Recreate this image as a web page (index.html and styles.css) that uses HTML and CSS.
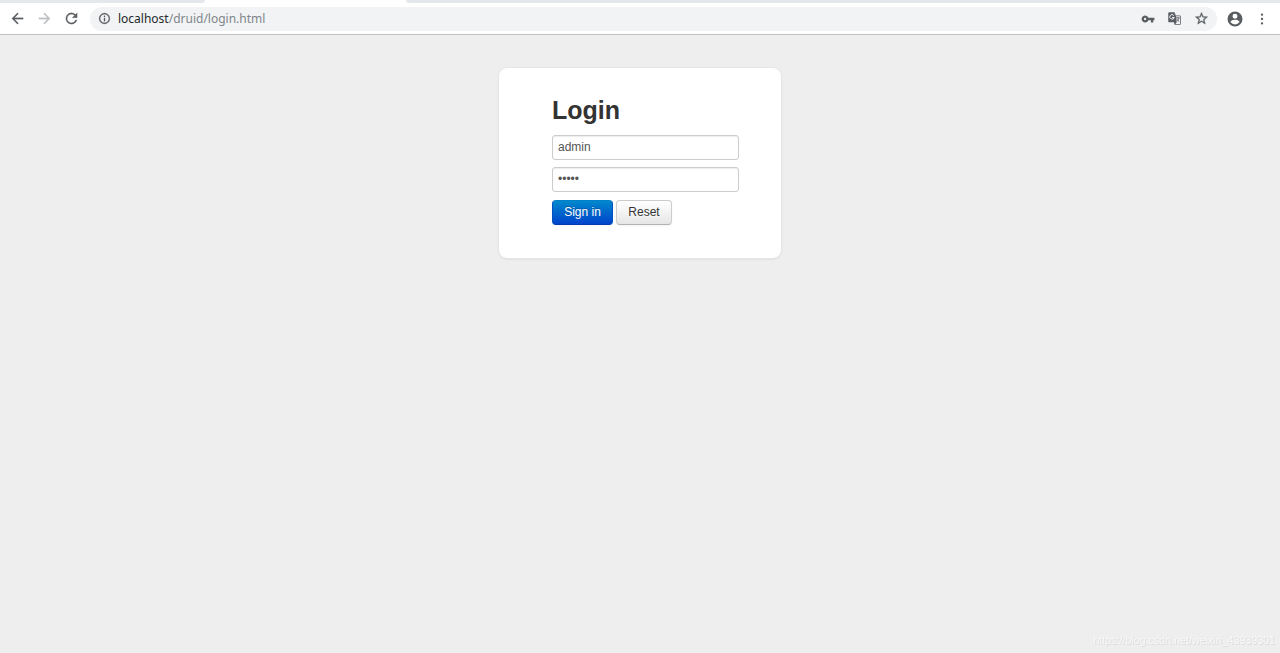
FILE: index.html
```html
<!DOCTYPE html>
<html lang="en">
<head>
    <meta charset="UTF-8">
    <title>druid monitor</title>
    <link rel="stylesheet" href="styles.css">
</head>

<body>
    <!-- browser bar -->
    <header class="browser">
        <div class="tabs">
            <div class="tab-left"></div>
            <div class="tab-right"></div>
        </div>
        <div class="toolbar">
            <svg class="icon back" viewBox="0 0 24 24"><path d="M20 11H7.8l5.6-5.6L12 4l-8 8 8 8 1.4-1.4L7.8 13H20z"/></svg>
            <svg class="icon forward" viewBox="0 0 24 24"><path d="M12 4l-1.4 1.4 5.6 5.6H4v2h12.2l-5.6 5.6L12 20l8-8z"/></svg>
            <svg class="icon reload" viewBox="0 0 24 24"><path d="M17.65 6.35A7.96 7.96 0 0 0 12 4a8 8 0 1 0 7.73 10h-2.08A6 6 0 1 1 12 6c1.66 0 3.14.69 4.22 1.78L13 11h7V4z"/></svg>
            <div class="address">
                <svg class="info" viewBox="0 0 24 24"><path d="M11 17h2v-6h-2zm1-15a10 10 0 1 0 0 20 10 10 0 0 0 0-20zm0 18a8 8 0 1 1 0-16 8 8 0 0 1 0 16zM11 9h2V7h-2z"/></svg>
                <span class="url"><b>localhost</b>/druid/login.html</span>
                <svg class="key" viewBox="0 0 24 24"><path d="M12.65 10A6 6 0 1 0 12.65 14H17v4h4v-4h2v-4zM7 14a2 2 0 1 1 0-4 2 2 0 0 1 0 4z"/></svg>
                <svg class="translate" viewBox="0 0 24 24">
                    <path d="M3 2h9l2 5h7l1 1v13l-1 1h-9l-1-4H3l-1-1V3z"/>
                    <path class="paper" d="M14.5 8.2H20.8V20.8H13.5L15.5 18z"/>
                    <path class="letter-g" d="M11 7.2A3.6 3.6 0 1 0 11.6 10.4H8.3"/>
                    <path class="letter-x" d="M14.5 11h6M17.5 9.5V11M19.3 11c-.5 2.5-2 4.5-3.6 5.5M15.8 12.5c.8 2 2 3.5 3.8 4.5"/>
                </svg>
                <svg class="star" viewBox="0 0 24 24"><path d="M22 9.24l-7.19-.62L12 2 9.19 8.63 2 9.24l5.46 4.73L5.82 21 12 17.27 18.18 21l-1.63-7.03zM12 15.4l-3.76 2.27 1-4.28-3.32-2.88 4.38-.38L12 6.1l1.71 4.04 4.38.38-3.32 2.88 1 4.28z"/></svg>
            </div>
            <svg class="user" viewBox="0 0 24 24"><path d="M12 2a10 10 0 1 0 0 20 10 10 0 0 0 0-20zm0 3a3.3 3.3 0 1 1 0 6.6A3.3 3.3 0 0 1 12 5zm0 14.2a7.2 7.2 0 0 1-6-3.22c.03-1.99 4-3.08 6-3.08s5.97 1.09 6 3.08a7.2 7.2 0 0 1-6 3.22z"/></svg>
            <svg class="more" viewBox="0 0 24 24"><circle cx="12" cy="4.5" r="2"/><circle cx="12" cy="12" r="2"/><circle cx="12" cy="19.5" r="2"/></svg>
        </div>
    </header>

    <!-- login form -->
    <main class="container">
        <form class="form-signin">
            <h2>Login</h2>
            <input type="text" class="input-block" value="admin">
            <input type="password" class="input-block" value="admin">
            <div class="buttons">
                <button type="button" class="btn btn-primary">Sign in</button>
                <button type="reset" class="btn">Reset</button>
            </div>
        </form>
    </main>

    <div class="watermark">https://blog.csdn.net/weixin_43939301</div>
</body>
</html>
```
FILE: styles.css
```css
* {
    box-sizing: border-box;
}

body {
    margin: 0;
    height: 653px;
    overflow: hidden;
    background-color: #eee;
    font-family: "Liberation Sans", Arial, sans-serif;
    font-size: 12px;
    color: #333;
}

/* browser bar */
.browser {
    height: 35px;
    background: #fff;
    border-bottom: 1px solid #bfc1c1;
}

.tabs {
    display: flex;
    justify-content: space-between;
    height: 3px;
}

.tab-left,
.tab-right {
    background: #e4e7eb;
}

.tab-left {
    width: 205px;
    border-bottom-right-radius: 4px;
}

.tab-right {
    width: 874px;
    border-bottom-left-radius: 4px;
}

.toolbar {
    display: flex;
    align-items: center;
    height: 31px;
    padding-left: 9px;
}

svg {
    display: block;
    flex: none;
    fill: #5a5d61;
}

.icon {
    width: 17px;
    height: 17px;
    margin-right: 10px;
    stroke: #5a5d61;
    stroke-width: .3;
}

.forward {
    fill: #bdbfc1;
    stroke: #bdbfc1;
}

.address {
    display: flex;
    align-items: center;
    width: 1127px;
    height: 24px;
    padding: 0 8px;
    border-radius: 12px;
    background: #f1f3f4;
}

.info {
    width: 13px;
    height: 13px;
    stroke: #5a5d61;
    stroke-width: .5;
}

.url {
    flex: 1;
    margin-left: 7px;
    font-family: "Noto Sans", sans-serif;
    font-size: 12px;
    line-height: 18px;
    color: #80868b;
}

.url b {
    font-weight: normal;
    color: #25272a;
}

.key {
    width: 14px;
    height: 14px;
}

.translate {
    width: 15px;
    height: 15px;
    margin-left: 12px;
}

.translate .paper {
    fill: #f1f3f4;
}

.translate .letter-g {
    fill: none;
    stroke: #f1f3f4;
    stroke-width: 1.6;
}

.translate .letter-x {
    fill: none;
    stroke: #5a5d61;
    stroke-width: 1.3;
}

.star {
    width: 15px;
    height: 15px;
    margin-left: 12px;
    stroke: #5a5d61;
    stroke-width: .5;
}

.user {
    width: 18px;
    height: 18px;
    margin-left: 9px;
}

.more {
    width: 14px;
    height: 14px;
    margin-left: 11px;
}

/* login form */
.container {
    padding-top: 32px;
}

.form-signin {
    width: 284px;
    height: 192px;
    margin: 0 auto;
    padding: 26px 42px 0 53px;
    background-color: #fff;
    border: 1px solid #e5e5e5;
    border-radius: 9px;
    box-shadow: 0 1px 2px rgba(0, 0, 0, .05);
}

.form-signin h2 {
    margin: 0 0 9px;
    font-size: 25px;
    line-height: 32px;
}

.input-block {
    display: block;
    width: 187px;
    height: 25px;
    margin: 0 0 7px;
    padding: 0 5px 2px;
    border: 1px solid #ccc;
    border-radius: 3px;
    box-shadow: inset 0 1px 1px rgba(0, 0, 0, .075);
    font-family: inherit;
    font-size: 12px;
    color: #555;
    outline: none;
}

.buttons {
    display: flex;
    gap: 3px;
    padding-top: 1px;
}

.btn {
    width: 56px;
    height: 25px;
    padding: 0 0 1px;
    border: 1px solid #ccc;
    border-bottom-color: #b3b3b3;
    border-radius: 4px;
    background: linear-gradient(to bottom, #fff, #e6e6e6);
    box-shadow: 0 1px 2px rgba(0, 0, 0, .05);
    font-family: inherit;
    font-size: 12px;
    color: #333;
    text-shadow: 0 1px 1px rgba(255, 255, 255, .75);
}

.btn-primary {
    width: 61px;
    border-color: #0080c8 #0050c4 #003cb0;
    background: linear-gradient(to bottom, #0088cc, #0044cc);
    color: #fff;
    text-shadow: 0 -1px 0 rgba(0, 0, 0, .25);
}

/* bottom right mark */
.watermark {
    position: absolute;
    right: 5px;
    bottom: 7px;
    font-size: 10.7px;
    line-height: 12px;
    color: #f8f8f8;
    text-shadow: 1px 1px 0 #dcdcdc;
}
```
